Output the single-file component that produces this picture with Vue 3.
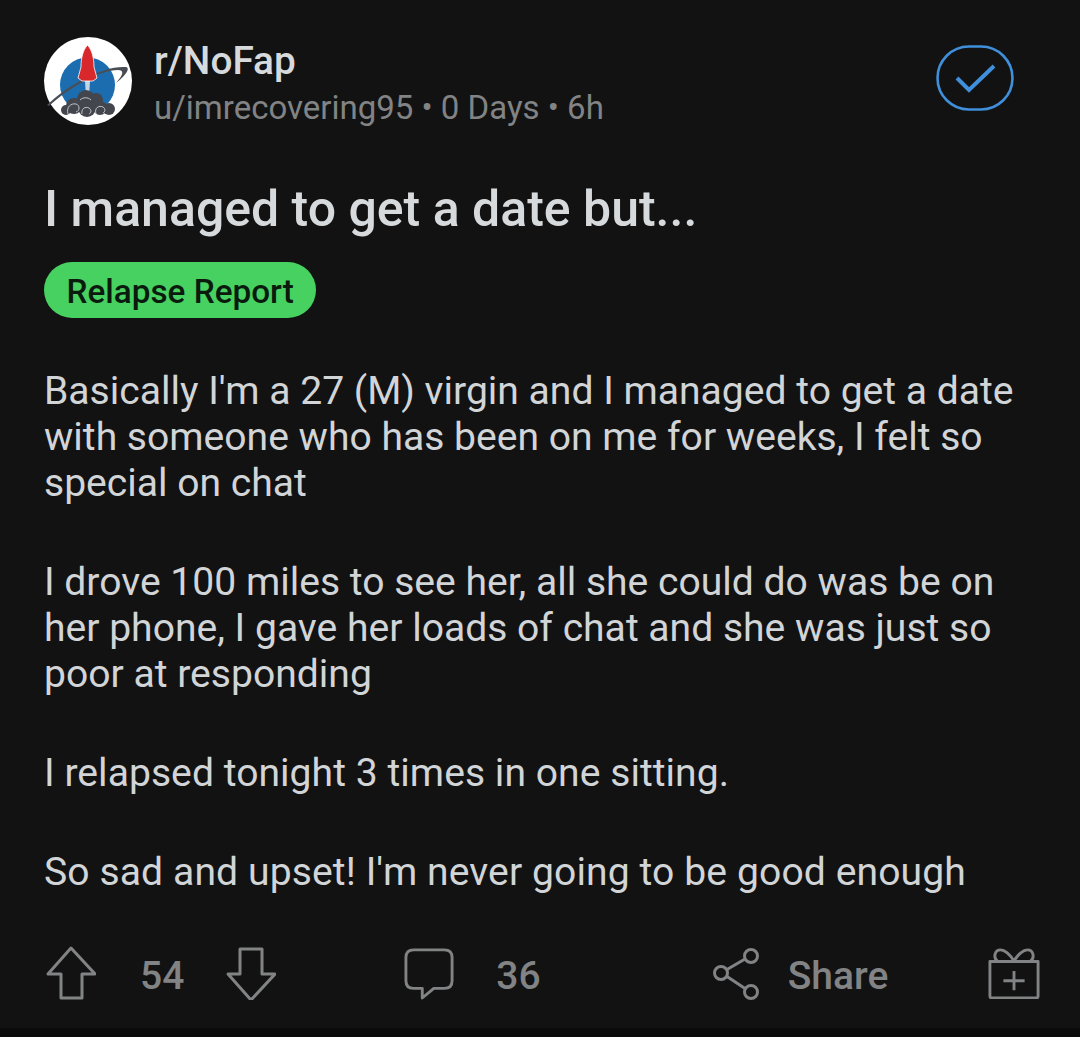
<script setup>
const paragraphs = [
  ["Basically I'm a 27 (M) virgin and I managed to get a date", 'with someone who has been on me for weeks, I felt so', 'special on chat'],
  ['I drove 100 miles to see her, all she could do was be on', 'her phone, I gave her loads of chat and she was just so', 'poor at responding'],
  ['I relapsed tonight 3 times in one sitting.'],
  ["So sad and upset! I'm never going to be good enough"]
]
</script>

<template>
  <div class="post">
    <header class="post-head">
      <svg class="avatar" viewBox="0 0 88 88">
        <circle cx="44" cy="44" r="44" fill="#fff" />
        <circle cx="43.5" cy="48" r="27.5" fill="#1b6db0" />
        <path d="M3 68 C24 48 58 29 81 30 C86 30 85 36 72 46 C80 37 80 33 74 33 C56 33 26 50 5 69 Z" fill="#4a4e54" />
        <path d="M41 44 h5 l-1 16 h-3 Z" fill="#c4d6e6" />
        <path d="M43.5 8 C39 13 37 21 37 30 L34 41 L38 44 H49 L53 41 L50 30 C50 21 48 13 43.5 8 Z" fill="#d8282c" stroke="#fff" stroke-width="0.8" />
        <g fill="#43474d">
          <circle cx="42" cy="62" r="9" />
          <circle cx="52" cy="63" r="7" />
          <circle cx="30" cy="69" r="8" />
          <circle cx="43" cy="71" r="9" />
          <circle cx="56" cy="71" r="7" />
          <circle cx="65" cy="72" r="6" />
          <circle cx="22" cy="73" r="5" />
        </g>
        <g fill="none" stroke="#dfe2e4" stroke-width="0.8">
          <path d="M24 77 C22 70 27 66 32 67 C36 68 36 74 32 75" />
          <path d="M38 77 C37 72 41 69 45 71 C48 73 47 76 45 77" />
          <path d="M52 77 C50 71 55 68 59 70 C62 72 61 75 59 76" />
          <path d="M36 63 C39 60 44 60 47 63" />
        </g>
      </svg>
      <div class="head-text">
        <div class="sub">r/NoFap</div>
        <div class="meta">u/imrecovering95 • 0 Days • 6h</div>
      </div>
      <svg class="mod-check" viewBox="0 0 78 66" fill="none" stroke="#3f8fdb">
        <rect x="1.5" y="1.5" width="75" height="63" rx="31.5" stroke-width="2.6" />
        <path d="M21 33 L33 45 L58 21" stroke-width="4" />
      </svg>
    </header>

    <h1 class="title">I managed to get a date but...</h1>
    <span class="flair">Relapse Report</span>

    <div class="body">
      <p v-for="(para, i) in paragraphs" :key="i">
        <span v-for="line in para" :key="line" class="line">{{ line }}</span>
      </p>
    </div>

    <footer class="actions">
      <div class="votes">
        <svg class="icon" viewBox="0 0 50 54">
          <path d="M25 2 L49 28 H36 V52 H15 V28 H2 Z" />
        </svg>
        <span class="count">54</span>
        <svg class="icon" viewBox="0 0 50 54">
          <path d="M25 54 L49 28 H36 V3 H14 V28 H2 Z" />
        </svg>
      </div>
      <div class="comments">
        <svg class="icon" viewBox="0 0 52 54">
          <path d="M10 3 H42 Q50 3 50 11 V35 Q50 43 42 43 H31 L19 53 V43 H10 Q2 43 2 35 V11 Q2 3 10 3 Z" />
        </svg>
        <span class="count">36</span>
      </div>
      <div class="share">
        <svg class="icon" viewBox="0 0 50 54">
          <circle cx="39" cy="10" r="6.5" />
          <circle cx="9" cy="27" r="6.5" />
          <circle cx="39" cy="46" r="6.5" />
          <path d="M15 23.5 L33 13 M15 30.5 L33 42.5" />
        </svg>
        <span class="count">Share</span>
      </div>
      <svg class="icon gift" viewBox="0 0 54 54">
        <path d="M2 15 H52 V51 Q52 53 50 53 H4 Q2 53 2 51 Z" />
        <path d="M27 15 C23 7 17 3 13 3 C7 3 5 11 10 15 M27 15 C31 7 37 3 41 3 C47 3 49 11 44 15" />
        <path d="M27 25 V45 M16 35 H38" />
      </svg>
    </footer>
  </div>
</template>

<style scoped>
.post {
  height: 1037px;
  box-sizing: border-box;
  padding-top: 37px;
  background: #121212;
  font-family: Roboto, "Liberation Sans", sans-serif;
  display: flex;
  flex-direction: column;
  align-items: flex-start;
  border-bottom: 9px solid #0b0b0b;
}

.post-head {
  display: flex;
  align-items: center;
  width: 1014px;
  margin-left: 44px;
  box-sizing: border-box;
}

.avatar {
  width: 88px;
  height: 88px;
  flex: none;
}

.head-text {
  flex: 1;
  align-self: flex-start;
  margin-left: 22px;
  padding-top: 1px;
}

.sub {
  font-size: 38.8px;
  font-weight: 500;
  line-height: 46px;
  color: #d7dadc;
}

.meta {
  margin-top: 7px;
  font-size: 33px;
  line-height: 34px;
  color: #818384;
}

.mod-check {
  width: 78px;
  height: 66px;
  flex: none;
  margin-right: 44px;
  margin-top: -6px;
}

.title {
  margin: 54px 0 0 44px;
  font-size: 50px;
  line-height: 60px;
  font-weight: 500;
  color: #d7dadc;
}

.flair {
  margin: 23px 0 0 44px;
  padding: 0 22.5px;
  height: 56px;
  line-height: 59px;
  border-radius: 28px;
  background: #46d160;
  color: #0a1a0d;
  font-size: 33.3px;
  font-weight: 500;
}

.body {
  margin: 50px 0 0 44px;
  color: #d2d5d7;
  font-size: 39.1px;
  line-height: 46px;
}

.body p {
  margin: 0 0 53px;
}

.body p:nth-child(3) {
  letter-spacing: 0.04px;
}

.body p:nth-child(4) {
  letter-spacing: 0.1px;
}

.line {
  display: block;
  white-space: nowrap;
}

.actions {
  display: flex;
  align-items: center;
  width: 100%;
  margin-top: 3px;
  padding-left: 46px;
  box-sizing: border-box;
}

.votes,
.comments,
.share {
  display: flex;
  align-items: center;
}

.icon {
  width: 50px;
  height: 54px;
  flex: none;
  margin-top: -5px;
  fill: none;
  stroke: #818384;
  stroke-width: 3;
  stroke-linejoin: round;
}

.count {
  color: #818384;
  font-size: 39px;
  font-weight: 500;
}

.votes .count {
  margin: 0 42px 0 44px;
}

.comments {
  margin-left: 128px;
}

.comments .count {
  margin-left: 42px;
}

.share {
  margin-left: 171px;
}

.share .count {
  margin-left: 26px;
}

.gift {
  width: 52px;
  height: 52px;
  margin-left: 100px;
}
</style>
